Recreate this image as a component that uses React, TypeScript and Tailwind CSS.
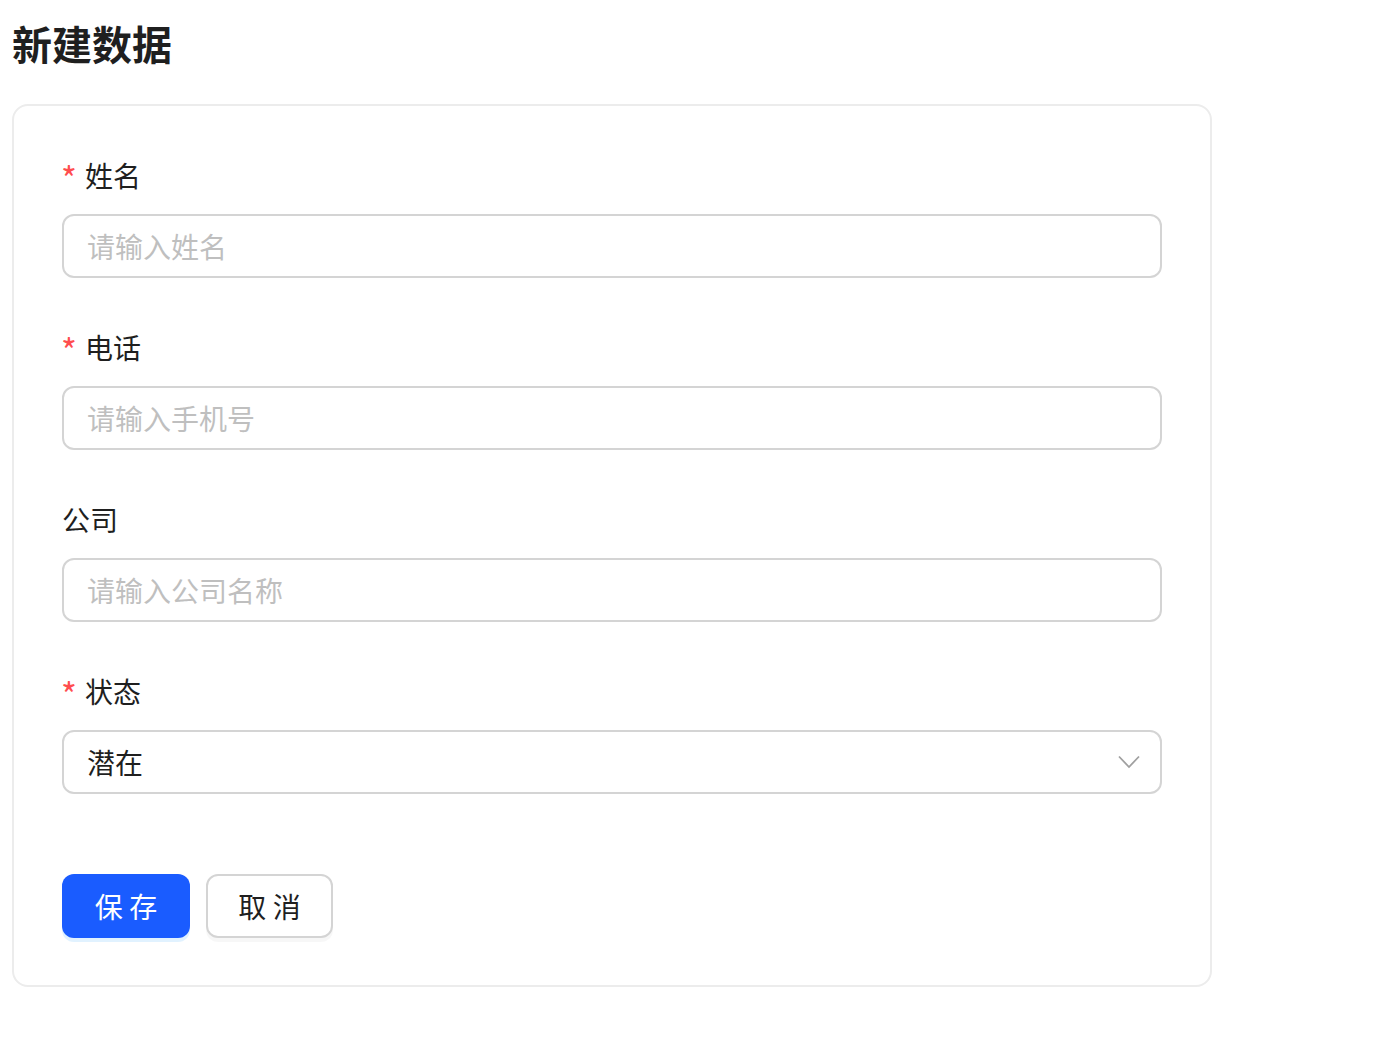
import React, { useState } from "react";

const FONT = { fontFamily: '"Noto Sans CJK SC", "Noto Sans", sans-serif' };

interface FieldProps {
  label: string;
  required?: boolean;
  children: React.ReactNode;
}

function Label({ label, required }: { label: string; required?: boolean }) {
  return (
    <div className="flex items-center h-[40px] mb-[18px] text-[28px] leading-[40px] text-[#1f1f1f]">
      {required && (
        <span className="text-[#ff4d4f] text-[34px] leading-[40px] mr-[8px] mt-[4px] -ml-[1px]">*</span>
      )}
      <span className="-mt-[2px]">{label}</span>
    </div>
  );
}

function Field({ label, required, children }: FieldProps) {
  return (
    <div className="mb-[50px]">
      <Label label={label} required={required} />
      {children}
    </div>
  );
}

const inputCls =
  "w-full h-[64px] rounded-[12px] border-2 border-[#d4d4d4] bg-white px-[23px] text-[28px] text-[#1f1f1f] outline-none placeholder:text-[#bfbfbf]";

export default function App() {
  const [name, setName] = useState("");
  const [phone, setPhone] = useState("");
  const [company, setCompany] = useState("");
  const [status, setStatus] = useState("潜在");

  return (
    <div className="min-h-screen bg-white pl-[12px] pt-[19px]" style={FONT}>
      <h1 className="text-[40px] leading-[48px] font-bold text-[#1f1f1f] mb-[37px]">新建数据</h1>

      <div className="w-[1200px] rounded-[16px] border-2 border-[#ececec] bg-white px-[48px] pt-[50px] pb-[47px]">
        <Field label="姓名" required>
          <input className={inputCls} placeholder="请输入姓名" value={name} onChange={(e) => setName(e.target.value)} />
        </Field>
        <Field label="电话" required>
          <input className={inputCls} placeholder="请输入手机号" value={phone} onChange={(e) => setPhone(e.target.value)} />
        </Field>
        <Field label="公司">
          <input className={inputCls} placeholder="请输入公司名称" value={company} onChange={(e) => setCompany(e.target.value)} />
        </Field>
        <div className="mb-[80px]">
          <Label label="状态" required />
          <div className="relative">
            <select
              className={inputCls + " appearance-none pr-16"}
              value={status}
              onChange={(e) => setStatus(e.target.value)}
              style={FONT}
            >
              <option>潜在</option>
              <option>跟进中</option>
              <option>已成交</option>
            </select>
            <svg
              className="absolute right-[22px] top-[25px] pointer-events-none"
              width="22"
              height="14"
              viewBox="0 0 22 14"
              fill="none"
            >
              <path d="M1 1.5 L11 12 L21 1.5" stroke="#a0a0a0" strokeWidth="1.8" />
            </svg>
          </div>
        </div>

        <div className="flex gap-[16px]">
          <button
            type="button"
            className="w-[128px] h-[64px] rounded-[12px] bg-[#1a5cff] text-white text-[28px] shadow-[0_4px_0_rgba(5,145,255,0.12)]"
          >
            保 存
          </button>
          <button
            type="button"
            className="w-[127px] h-[64px] rounded-[12px] border-2 border-[#d4d4d4] bg-white text-[#1f1f1f] text-[28px] shadow-[0_4px_0_rgba(0,0,0,0.03)]"
          >
            取 消
          </button>
        </div>
      </div>
    </div>
  );
}
